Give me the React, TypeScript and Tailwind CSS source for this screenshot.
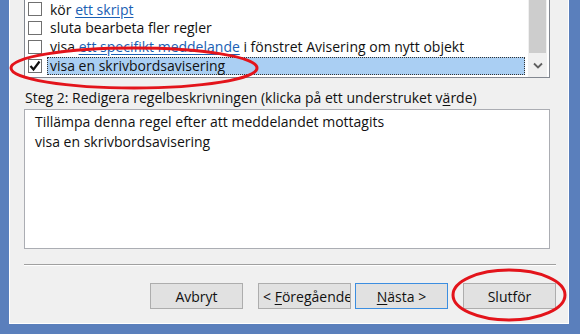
import React from 'react';

const rows = [
  { id: 1, parts: [{ t: 'kör ' }, { t: 'ett skript', link: true }] },
  { id: 2, parts: [{ t: 'sluta bearbeta fler regler' }] },
  {
    id: 3,
    parts: [
      { t: 'visa ' },
      { t: 'ett specifikt meddelande', link: true },
      { t: ' i fönstret Avisering om nytt objekt' },
    ],
  },
];

function CheckBox({ checked }: { checked?: boolean }) {
  return (
    <div className="w-[14px] h-[14px] border border-[#707070] bg-white flex items-center justify-center shrink-0">
      {checked && (
        <svg width="12" height="12" viewBox="0 0 12 12">
          <path d="M1.5 6 L4.5 9.5 L10.5 1.5" fill="none" stroke="#111" strokeWidth="2.2" />
        </svg>
      )}
    </div>
  );
}

export default function App() {
  return (
    <div className="w-[580px] h-[334px] bg-[#5a7fbc] overflow-hidden relative font-['Open_Sans',sans-serif] text-[14px] text-[#111]">
      <div className="ml-[9px] w-[560px] h-[324px] bg-[#f0f0f0] border-l border-r border-b border-white pl-[14px] pr-[13px] flex flex-col">
        {/* list of actions */}
        <div className="h-[78px] w-[526px] bg-white border-l border-r border-b border-[#828790] flex">
          <div className="flex-1 flex flex-col">
            {rows.map((r, i) => (
              <div key={r.id} className={`flex items-center ${i === 0 ? 'h-[18px]' : 'h-[19px]'}`}>
                <div className="ml-[3px]"><CheckBox /></div>
                <div className="ml-[8px] leading-[19px] whitespace-nowrap">
                  {r.parts.map((p, j) =>
                    p.link ? (
                      <span key={j} className="text-[#1a5fb4] underline underline-offset-2">{p.t}</span>
                    ) : (
                      <span key={j}>{p.t}</span>
                    )
                  )}
                </div>
              </div>
            ))}
            <div className="flex items-center h-[19px]">
              <div className="ml-[3px]"><CheckBox checked /></div>
              <div className="ml-[5px] w-[478px] h-[18px] bg-[#aacff3] border border-dotted border-[#333] flex items-center pl-[2px] whitespace-nowrap">
                visa en skrivbordsavisering
              </div>
            </div>
          </div>
          <div className="w-[19px] mr-[2px] flex flex-col bg-[#f0f0f0]">
            <div className="h-[53px] mx-[1px] bg-[#cdcdcd]" />
            <div className="flex-1 flex items-center justify-center">
              <svg width="10" height="7" viewBox="0 0 10 7">
                <path d="M1 1.5 L5 5.5 L9 1.5" fill="none" stroke="#606060" strokeWidth="1.8" />
              </svg>
            </div>
          </div>
        </div>

        <div className="mt-[10px] h-[19px] leading-[19px] pl-[1px] whitespace-nowrap">
          Steg 2: Redigera regelbeskrivningen (klicka på ett understruket v<span className="underline underline-offset-2">ä</span>rde)
        </div>

        <div className="mt-[2px] h-[140px] w-[526px] bg-white border border-[#abadb3] pl-[10px] pt-[2px] leading-[20px]">
          <div>Tillämpa denna regel efter att meddelandet mottagits</div>
          <div>visa en skrivbordsavisering</div>
        </div>

        <div className="mt-[15px] h-[2px] w-[532px] border-t border-[#a0a0a0] border-b border-b-white" />

        <div className="mt-[17px] w-[532px] flex justify-end">
          <button className="w-[93px] h-[26px] bg-[#e1e1e1] border border-[#adadad]">Avbryt</button>
          <button className="ml-[15px] w-[93px] h-[26px] bg-[#e1e1e1] border border-[#adadad] overflow-hidden whitespace-nowrap text-left pl-[4px]">
            &lt; <span className="underline underline-offset-2">F</span>öregående
          </button>
          <button className="ml-[4px] w-[93px] h-[26px] bg-[#e1e1e1] border border-[#3c8ee0]">
            <span className="underline underline-offset-2">N</span>ästa &gt;
          </button>
          <button className="ml-[15px] w-[93px] h-[26px] bg-[#e1e1e1] border border-[#adadad]">Slutför</button>
        </div>
      </div>

      {/* red annotation ellipses */}
      <svg className="absolute left-0 top-0 pointer-events-none" width="580" height="334">
        <ellipse cx="134" cy="68" rx="123" ry="20" fill="none" stroke="#e3141b" strokeWidth="3" />
        <ellipse cx="509" cy="295" rx="56" ry="25" fill="none" stroke="#e3141b" strokeWidth="3" />
      </svg>
    </div>
  );
}
